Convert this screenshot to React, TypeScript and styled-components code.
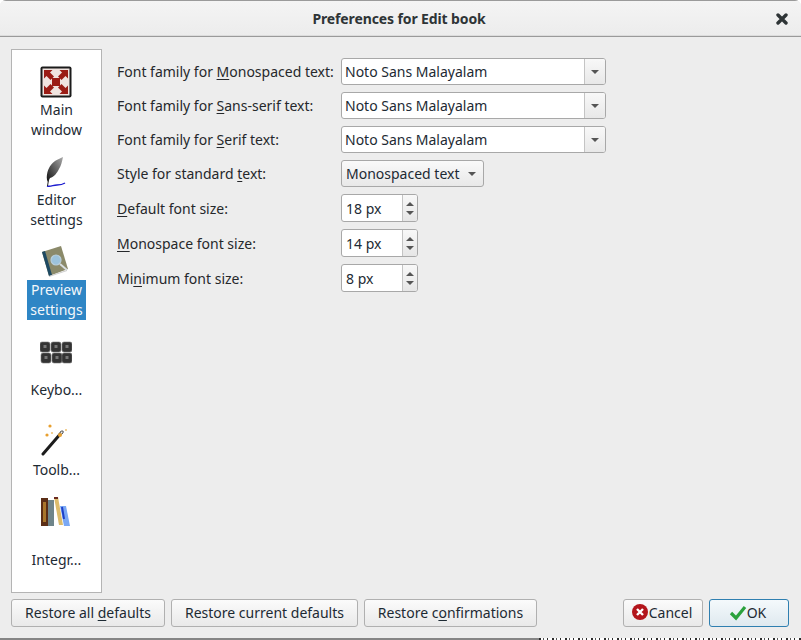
import React from "react";
import styled, { createGlobalStyle } from "styled-components";

const Global = createGlobalStyle`
  html, body { margin: 0; padding: 0; background: #fff; }
  body { font-family: "Noto Sans", "Open Sans", sans-serif; font-size: 14px; color: #2e3436; }
`;

const Window = styled.div`
  width: 801px; height: 638px; background: #ededed; display: flex; flex-direction: column;
  overflow: hidden; border-radius: 6px 6px 0 0;
`;
const TitleBar = styled.div`
  height: 35px; flex: none; background: linear-gradient(#f4f4f4, #ececec); border-top: 1px solid #9a9a9a; border-bottom: 1px solid #9a9a9a;
  box-shadow: inset 0 -1px 0 #dcdcdc; display: flex; align-items: center; justify-content: center; position: relative;
`;
const Title = styled.div`font-weight: 700; font-size: 14px; color: #2e3436; letter-spacing: -0.12px; padding-right: 3px;`;
const CloseIcon = styled.svg`position: absolute; right: 13px; top: 12px; width: 12px; height: 12px;`;
const Body = styled.div`flex: 1; display: flex; padding: 12px 12px 0 11px; gap: 15px; min-height: 0;`;
const Sidebar = styled.div`
  width: 91px; height: 544px; box-sizing: border-box; flex: none; background: #fff; border: 1px solid #b4b4b4;
  display: flex; flex-direction: column; align-items: center; padding-top: 16px;
`;
const NavItem = styled.div<{ $top: number }>`
  display: flex; flex-direction: column; align-items: center; margin-top: ${p => p.$top}px;
`;
const NavIcon = styled.svg`width: 32px; height: 32px; display: block;`;
const NavLabel = styled.div<{ $gap: number; $active?: boolean }>`
  margin-top: ${p => p.$gap}px; line-height: 20px; font-size: 14px; text-align: center; padding: 0 3px;
  color: ${p => (p.$active ? "#f4f8fb" : "#1d2a33")}; background: ${p => (p.$active ? "#2f86c5" : "transparent")};
`;
const Form = styled.div`
  display: grid; grid-template-columns: 224px auto; grid-auto-rows: min-content; row-gap: 7px;
  justify-content: start; justify-items: start; align-items: center; padding-top: 9px;
`;
const Label = styled.label`font-size: 14px; color: #26282b; white-space: nowrap;`;
const Key = styled.span`text-decoration: underline; text-underline-offset: 2px;`;
const FontCombo = styled.div`
  width: 265px; height: 27px; box-sizing: border-box; border: 1px solid #a8a8a8; border-radius: 3px; background: #fff;
  display: flex; align-items: center; overflow: hidden;
`;
const ComboText = styled.div`flex: 1; padding-left: 3px; color: #1d2a33; white-space: nowrap;`;
const ComboArrow = styled.div`
  width: 20px; height: 100%; flex: none; border-left: 1px solid #c4c4c4; background: linear-gradient(#f8f8f8, #e8e8e8);
  display: flex; align-items: center; justify-content: center;
`;
const Caret = styled.span`
  display: block; width: 0; height: 0; border-left: 4px solid transparent; border-right: 4px solid transparent; border-top: 4px solid #555;
`;
const StyleCombo = styled.div`
  width: 143px; height: 27px; box-sizing: border-box; border: 1px solid #a8a8a8; border-radius: 3px;
  background: linear-gradient(#fafafa, #e8e8e8); display: flex; align-items: center; justify-content: space-between;
  padding: 0 7px 0 4px; color: #1d2a33; white-space: nowrap;
`;
const Spin = styled.div`
  width: 77px; height: 28px; box-sizing: border-box; border: 1px solid #a8a8a8; border-radius: 3px; background: #fff;
  display: flex; align-items: center; overflow: hidden;
`;
const SpinText = styled.div`flex: 1; padding-left: 4px; color: #1d2a33;`;
const SpinBtns = styled.div`
  width: 14px; height: 100%; flex: none; border-left: 1px solid #c4c4c4; background: linear-gradient(#f8f8f8, #e6e6e6);
  display: flex; flex-direction: column; align-items: center; justify-content: center; gap: 5px;
`;
const Up = styled.span`
  display: block; width: 0; height: 0; border-left: 4px solid transparent; border-right: 4px solid transparent; border-bottom: 4px solid #555;
`;
const Footer = styled.div`
  flex: none; display: flex; align-items: center; justify-content: space-between; padding: 0 12px 11px 11px; margin-top: 6px;
`;
const Group = styled.div`display: flex; gap: 6px;`;
const Button = styled.div<{ $w: number; $primary?: boolean; $icon?: boolean }>`
  width: ${p => p.$w}px; height: 28px; box-sizing: border-box; border: 1px solid ${p => (p.$primary ? "#2f7fb0" : "#b0b0b0")};
  border-radius: 3px; background: ${p => (p.$primary ? "linear-gradient(#f4f9fc, #dfe9ef)" : "linear-gradient(#fbfbfb, #e9e9e9)")};
  display: flex; align-items: center; justify-content: center; gap: 0; color: #1d2a33; white-space: nowrap;
  padding: 0 ${p => (p.$icon ? 3 : 0)}px 2px 0;
`;
const BtnIcon = styled.svg`width: 18px; height: 18px; flex: none;`;
const BottomStrip = styled.div`
  height: 2px; display: flex; background: #fff;
`;
const StripEdge = styled.div`width: 539px; flex: none; background: #858585;`;
const StripText = styled.div`
  flex: 1; background: repeating-linear-gradient(90deg, #2b2b2b 0 2px, #ffffff 2px 4px, #555 4px 5px, #fff 5px 8px, #2b2b2b 8px 9px, #fff 9px 13px);
`;

const MainIcon = () => (
  <NavIcon viewBox="0 0 32 32">
    <rect x="0.5" y="0.5" width="31" height="31" rx="2" fill="#1b1b1b" />
    <rect x="2.5" y="2.5" width="27" height="27" fill="#f0e4e0" />
    <rect x="12" y="12" width="8" height="8" fill="#9a1c15" />
    <path d="M4 4h8.5L10 6.5 14 10.5 10.5 14 6.5 10 4 12.5z" fill="#9a1c15" />
    <path d="M28 4v8.5L25.5 10 21.5 14 18 10.5 22 6.5 19.5 4z" fill="#9a1c15" />
    <path d="M4 28v-8.5L6.5 22l4-4L14 21.5l-4 4L12.5 28z" fill="#9a1c15" />
    <path d="M28 28h-8.5l2.5-2.5-4-4L21.5 18l4 4 2.5-2.5z" fill="#9a1c15" />
  </NavIcon>
);
const QuillIcon = () => (
  <NavIcon viewBox="0 0 32 32">
    <defs>
      <linearGradient id="q" x1="0" y1="1" x2="1" y2="0"><stop offset="0" stopColor="#111" /><stop offset="1" stopColor="#aaa" /></linearGradient>
    </defs>
    <path d="M7 24c-1-7 2-15 8-19 3-2 6-3 8-4-1 5-2 9-4 12-2 4-5 8-9 9l-2 4z" fill="url(#q)" />
    <path d="M7 30c4 1 6-1 10-1 3 0 5 0 8-2" stroke="#1c1ccf" strokeWidth="1.4" fill="none" />
    <path d="M7.5 30l1-6" stroke="#222" strokeWidth="1" />
  </NavIcon>
);
const BookIcon = () => (
  <NavIcon viewBox="0 0 32 32">
    <path d="M2 6L21 0l7 23-19 7z" fill="#8b8a6a" />
    <path d="M2 6l3-1 7 24-3 1z" fill="#1e4a63" />
    <circle cx="16" cy="14" r="5" fill="#9cc3dc" stroke="#b9cfdb" strokeWidth="1.2" />
    <path d="M20 18l7 6" stroke="#d7dde0" strokeWidth="2" />
    <path d="M9 30.5l18-6" stroke="#ccc" strokeWidth="1" />
  </NavIcon>
);
const KeysIcon = () => (
  <NavIcon viewBox="0 0 32 32">
    {[[0, 6], [11, 6], [22, 6], [1, 17], [12, 17], [22, 17]].map(([x, y]) => (
      <g key={`${x}-${y}`}>
        <rect x={x} y={y} width="10" height="10" rx="2" fill="#333" stroke="#777" strokeWidth="0.6" />
        <rect x={x + 3.5} y={y + 3} width="3" height="3" fill="#777" />
      </g>
    ))}
  </NavIcon>
);
const WandIcon = () => (
  <NavIcon viewBox="0 0 32 32">
    <path d="M3 30L22 8" stroke="#1c1c1c" strokeWidth="3" strokeLinecap="round" />
    <path d="M20.5 9.8L22.5 7.5" stroke="#eee" strokeWidth="1.6" />
    <circle cx="10" cy="2" r="1.6" fill="#e8a030" />
    <circle cx="7" cy="11" r="1.6" fill="#e8a030" />
    <circle cx="20" cy="11" r="2" fill="#e8a030" />
    <circle cx="26" cy="6" r="1" fill="#eec070" />
    <circle cx="12" cy="9" r="1" fill="#eec070" />
  </NavIcon>
);
const BooksIcon = () => (
  <NavIcon viewBox="0 0 32 32">
    <rect x="1" y="2" width="7" height="28" fill="#5b2e16" />
    <rect x="3" y="6" width="3" height="20" fill="#a9762b" />
    <rect x="8" y="4" width="6" height="26" fill="#6f858a" />
    <path d="M14 1h4l5 28h-4z" fill="#dcbc6c" />
    <path d="M14 1h4v2h-4z" fill="#6b2a1f" />
    <path d="M20 10h6l4 20h-6z" fill="#7aa8f4" />
    <path d="M22 11l2 12" stroke="#1c3fc8" strokeWidth="2" />
  </NavIcon>
);

export default function App() {
  return (
    <>
      <Global />
      <Window>
        <TitleBar>
          <Title>Preferences for Edit book</Title>
          <CloseIcon viewBox="0 0 12 12">
            <path d="M2 2l8 8M10 2l-8 8" stroke="#2e3436" strokeWidth="3.4" strokeLinecap="round" />
          </CloseIcon>
        </TitleBar>
        <Body>
          <Sidebar>
            <NavItem $top={0}><MainIcon /><NavLabel $gap={2}>Main<br />window</NavLabel></NavItem>
            <NavItem $top={16}><QuillIcon /><NavLabel $gap={2}>Editor<br />settings</NavLabel></NavItem>
            <NavItem $top={16}><BookIcon /><NavLabel $gap={2} $active>Preview<br />settings</NavLabel></NavItem>
            <NavItem $top={16}><KeysIcon /><NavLabel $gap={12}>Keybo...</NavLabel></NavItem>
            <NavItem $top={24}><WandIcon /><NavLabel $gap={4}>Toolb...</NavLabel></NavItem>
            <NavItem $top={16}><BooksIcon /><NavLabel $gap={22}>Integr...</NavLabel></NavItem>
          </Sidebar>
          <Form>
            <Label>Font family for <Key>M</Key>onospaced text:</Label>
            <FontCombo><ComboText>Noto Sans Malayalam</ComboText><ComboArrow><Caret /></ComboArrow></FontCombo>
            <Label>Font family for <Key>S</Key>ans-serif text:</Label>
            <FontCombo><ComboText>Noto Sans Malayalam</ComboText><ComboArrow><Caret /></ComboArrow></FontCombo>
            <Label>Font family for <Key>S</Key>erif text:</Label>
            <FontCombo><ComboText>Noto Sans Malayalam</ComboText><ComboArrow><Caret /></ComboArrow></FontCombo>
            <Label>Style for standard <Key>t</Key>ext:</Label>
            <StyleCombo><span>Monospaced text</span><Caret /></StyleCombo>
            <Label><Key>D</Key>efault font size:</Label>
            <Spin><SpinText>18 px</SpinText><SpinBtns><Up /><Caret /></SpinBtns></Spin>
            <Label><Key>M</Key>onospace font size:</Label>
            <Spin><SpinText>14 px</SpinText><SpinBtns><Up /><Caret /></SpinBtns></Spin>
            <Label>Mi<Key>n</Key>imum font size:</Label>
            <Spin><SpinText>8 px</SpinText><SpinBtns><Up /><Caret /></SpinBtns></Spin>
          </Form>
        </Body>
        <Footer>
          <Group>
            <Button $w={154}><span>Restore all <Key>d</Key>efaults</span></Button>
            <Button $w={187}><span>Restore current defaults</span></Button>
            <Button $w={173}><span>Restore c<Key>o</Key>nfirmations</span></Button>
          </Group>
          <Group>
            <Button $w={80} $icon>
              <BtnIcon viewBox="0 0 18 18">
                <circle cx="9" cy="9" r="8" fill="#b3151b" />
                <path d="M6 6l6 6M12 6l-6 6" stroke="#fff" strokeWidth="2.4" />
              </BtnIcon>
              <span>Cancel</span>
            </Button>
            <Button $w={80} $primary $icon>
              <BtnIcon viewBox="0 0 18 18">
                <path d="M2 10l5 5 9-11" stroke="#2aa13c" strokeWidth="3.2" fill="none" />
              </BtnIcon>
              <span>OK</span>
            </Button>
          </Group>
        </Footer>
      </Window>
      <BottomStrip><StripEdge /><StripText /></BottomStrip>
    </>
  );
}
